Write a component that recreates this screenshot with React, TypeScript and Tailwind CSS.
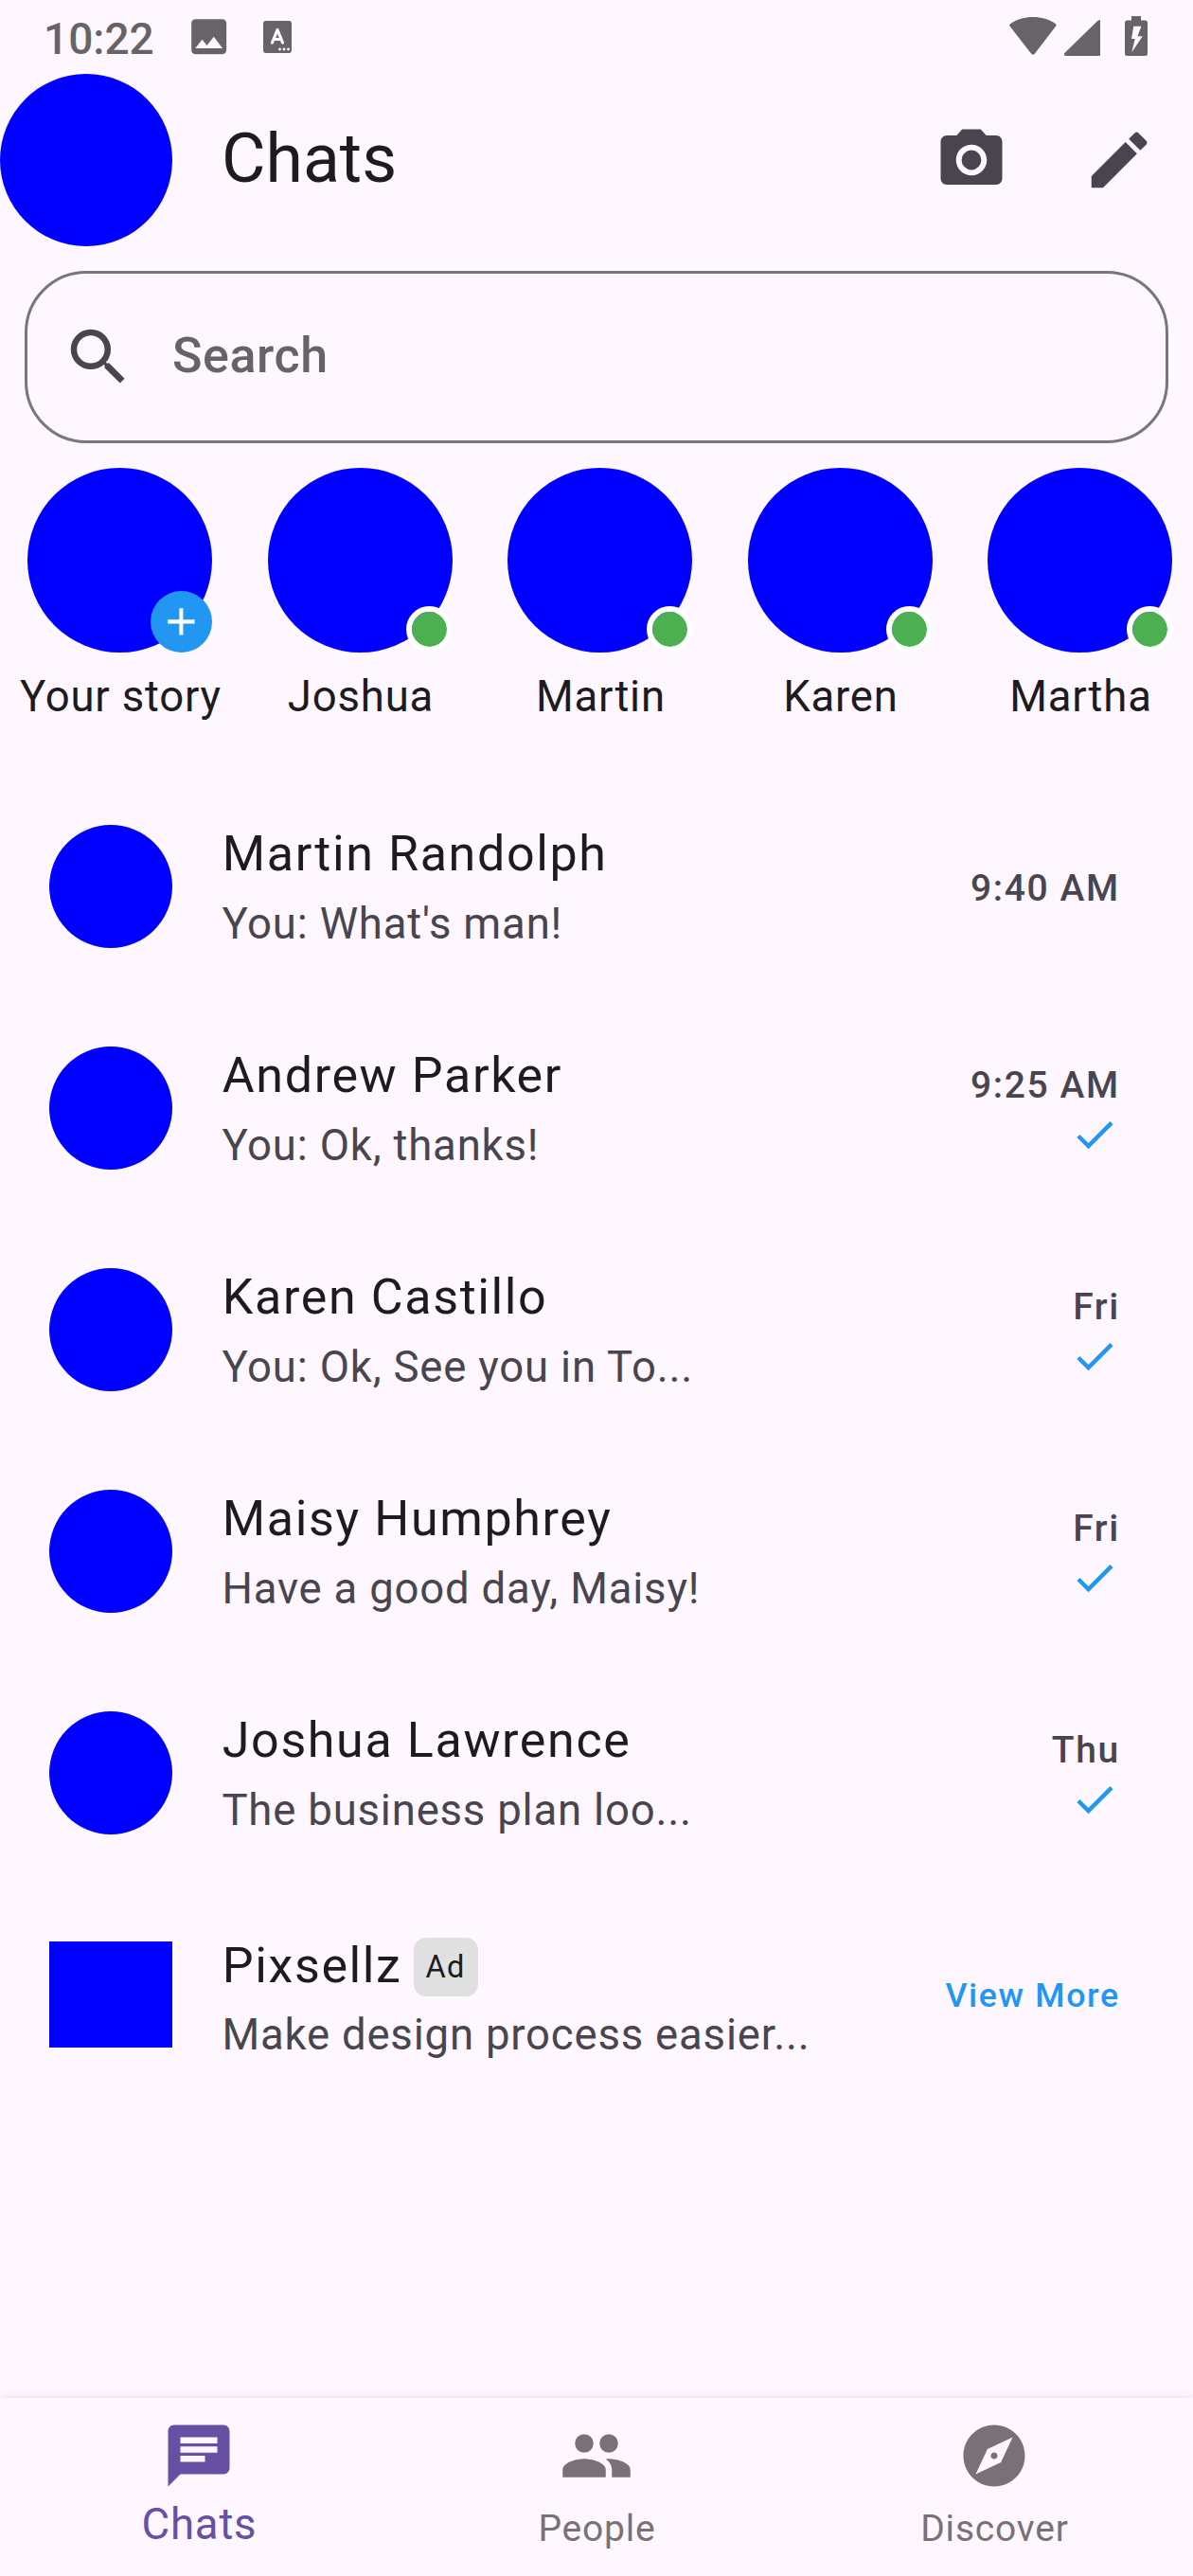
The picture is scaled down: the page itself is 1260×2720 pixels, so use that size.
import React from "react";

const ICONS = {
  camera:
    "M9 2L7.17 4H4c-1.1 0-2 .9-2 2v12c0 1.1.9 2 2 2h16c1.1 0 2-.9 2-2V6c0-1.1-.9-2-2-2h-3.17L15 2H9zm3 15c-2.76 0-5-2.24-5-5s2.24-5 5-5 5 2.24 5 5-2.24 5-5 5zM12 8.8a3.2 3.2 0 1 0 0 6.4 3.2 3.2 0 0 0 0-6.4z",
  edit: "M3 17.25V21h3.75L17.81 9.94l-3.75-3.75L3 17.25zM20.71 7.04a1 1 0 0 0 0-1.41l-2.34-2.34a1 1 0 0 0-1.41 0l-1.83 1.83 3.75 3.75 1.83-1.83z",
  search:
    "M15.5 14h-.79l-.28-.27A6.471 6.471 0 0 0 16 9.5 6.5 6.5 0 1 0 9.5 16c1.61 0 3.09-.59 4.23-1.57l.27.28v.79l5 4.99L20.49 19l-4.99-5zm-6 0C7.01 14 5 11.99 5 9.5S7.01 5 9.5 5 14 7.01 14 9.5 11.99 14 9.5 14z",
  add: "M19 13h-6v6h-2v-6H5v-2h6V5h2v6h6v2z",
  check: "M9 16.17L4.83 12l-1.42 1.41L9 19 21 7l-1.41-1.41z",
  chat: "M20 2H4c-1.1 0-1.99.9-1.99 2L2 22l4-4h14c1.1 0 2-.9 2-2V4c0-1.1-.9-2-2-2zM6 9h12v2H6V9zm8 5H6v-2h8v2zm4-6H6V6h12v2z",
  explore:
    "M12 10.9c-.61 0-1.1.49-1.1 1.1s.49 1.1 1.1 1.1c.61 0 1.1-.49 1.1-1.1s-.49-1.1-1.1-1.1zM12 2C6.48 2 2 6.48 2 12s4.48 10 10 10 10-4.48 10-10S17.52 2 12 2zm2.19 12.19L6 18l3.81-8.19L18 6l-3.81 8.19z",
  image:
    "M21 19V5c0-1.1-.9-2-2-2H5c-1.1 0-2 .9-2 2v14c0 1.1.9 2 2 2h14c1.1 0 2-.9 2-2zM8.500 13.500l2.500 3.010L14.500 12l4.500 6H5l3.500-4.500z",
};

function Icon({ d, className }: { d: string; className: string }) {
  return (
    <svg viewBox="0 0 24 24" className={`block shrink-0 ${className}`} fill="currentColor">
      <path d={d} fillRule="evenodd" />
    </svg>
  );
}

function PeopleIcon({ className }: { className: string }) {
  return (
    <svg viewBox="0 0 24 24" className={`block shrink-0 ${className}`} fill="currentColor">
      <circle cx="8" cy="8" r="3" />
      <circle cx="16" cy="8" r="3" />
      <path d="M8 13c-2.330 0-7 1.170-7 3.500V19h14v-2.500C15 14.170 10.330 13 8 13z" />
      <path d="M16 13c-.29 0-.62.020-.97.050 1.160.840 1.970 1.970 1.970 3.450V19h6v-2.500c0-2.330-4.670-3.500-7-3.500z" />
    </svg>
  );
}

function StatusBar() {
  return (
    <div className="flex h-[78px] items-start text-[#676468]">
      <span className="ml-[46px] mt-[14px] w-[150px] text-[46px] font-medium leading-[55px]">10:22</span>
      <Icon d={ICONS.image} className="mt-[14px] size-[49.3px]" />
      <svg viewBox="0 0 30 34" className="ml-[32.500px] mt-[22px] h-[34px] w-[30px]">
        <rect width="30" height="34" rx="3" fill="currentColor" />
        <path d="M9.500 23L15 9.500L20.500 23M11.500 19.500h7" fill="none" stroke="#fef7ff" strokeWidth="3.200" strokeLinecap="round" strokeLinejoin="round" />
        <circle cx="17.500" cy="30" r="1.400" fill="#fef7ff" />
        <circle cx="22" cy="30" r="1.400" fill="#fef7ff" />
        <circle cx="26.500" cy="30" r="1.400" fill="#fef7ff" />
      </svg>
      <svg viewBox="0 0 146 42" className="ml-auto mr-[48px] mt-[17px] h-[42px] w-[146px]" fill="currentColor">
        <path d="M1 8.200C14.500-1.300 35.500-1.300 49 8.200Q50 9.300 49 10.700L26.800 39.700Q25 41.500 23.200 39.700L.6 10.700Q-.4 9.300 1 8.200z" />
        <path d="M58.700 38.700L93.500 4.800Q95.500 3 96 5.500V40.500Q96 42 94.500 42H60Q57.500 42 58 39.500z" />
        <path fillRule="evenodd" d="M129 0h10v4.500h4.500Q146 4.500 146 7v32.500Q146 42 143.500 42h-19Q122 42 122 39.500V7Q122 4.500 124.500 4.500H129zM131.200 10.700L129 24h3.700L129.300 38.200L140.700 21.200H135.500L139.400 10.700z" />
      </svg>
    </div>
  );
}

function AppBar() {
  return (
    <header className="flex h-[182px] items-center">
      <div className="size-[182px] rounded-full bg-[#0000ff]" />
      <h1 className="mb-[3px] ml-[52px] text-[71.5px] leading-[91px] text-[#1d1b20]">Chats</h1>
      <div className="ml-auto flex text-[#49454f]">
        <button className="flex size-[156px] items-center justify-center">
          <Icon d={ICONS.camera} className="size-[78px]" />
        </button>
        <button className="flex size-[156px] items-center justify-center">
          <Icon d={ICONS.edit} className="size-[78px]" />
        </button>
      </div>
    </header>
  );
}

function SearchField() {
  return (
    <div className="mx-[26px] mt-[26px] flex h-[182px] items-center rounded-[65px] border-[3px] border-[#79747e] pl-[36px]">
      <Icon d={ICONS.search} className="size-[78px] text-[#49454f]" />
      <span className="mb-[3px] ml-[39px] text-[52px] font-medium leading-[78px] tracking-[0.55px] text-[#666367]">Search</span>
    </div>
  );
}

const stories = ["Your story", "Joshua", "Martin", "Karen", "Martha"];

function Stories() {
  return (
    <section className="mt-[26px] flex h-[325px] overflow-hidden">
      {stories.map((name, i) => (
        <div key={name} className="flex w-[253.5px] shrink-0 flex-col items-center">
          <div className="relative size-[195px] rounded-full bg-[#0000ff]">
            {i === 0 ? (
              <div className="absolute bottom-0 right-0 flex size-[65px] items-center justify-center rounded-full bg-[#2196f3] text-white">
                <Icon d={ICONS.add} className="size-[48.75px]" />
              </div>
            ) : (
              <div className="absolute bottom-0 -right-[0.5px] size-[49px] rounded-full border-[6.5px] border-white bg-[#4caf50] bg-clip-padding" />
            )}
          </div>
          <span className="mt-[14px] whitespace-nowrap pl-[1.4px] text-[45.5px] leading-[65px] tracking-[0.8125px] text-[#1d1b20]">{name}</span>
        </div>
      ))}
    </section>
  );
}

type Chat = { name: string; message: string; time: string; read: boolean };

const chats: Chat[] = [
  { name: "Martin Randolph", message: "You: What's man!", time: "9:40 AM", read: false },
  { name: "Andrew Parker", message: "You: Ok, thanks!", time: "9:25 AM", read: true },
  { name: "Karen Castillo", message: "You: Ok, See you in To...", time: "Fri", read: true },
  { name: "Maisy Humphrey", message: "Have a good day, Maisy!", time: "Fri", read: true },
  { name: "Joshua Lawrence", message: "The business plan loo...", time: "Thu", read: true },
];

function ChatRow({ chat }: { chat: Chat }) {
  return (
    <li className="flex h-[234px] items-center pl-[52px] pr-[78px]">
      <div className="size-[130px] rounded-full bg-[#0000ff]" />
      <div className="ml-[52px] flex flex-col whitespace-nowrap">
        <span className="mb-[4px] pl-[0.8px] text-[52px] leading-[74px] tracking-[1.625px] text-[#1d1b20]">{chat.name}</span>
        <span className="pl-[0.4px] text-[45.5px] leading-[65px] tracking-[0.8125px] text-[#49454f]">{chat.message}</span>
      </div>
      <div className="ml-auto flex flex-col items-end pt-[3px]">
        <span className="-mr-[0.8px] text-[39px] font-medium leading-[52px] tracking-[1.625px] text-[#49454f]">{chat.time}</span>
        {chat.read && <Icon d={ICONS.check} className="size-[52px] text-[#2196f3]" />}
      </div>
    </li>
  );
}

function AdRow() {
  return (
    <li className="flex h-[234px] items-center pl-[52px] pr-[78px]">
      <div className="h-[112px] w-[130px] bg-[#0000ff]" />
      <div className="ml-[52px] flex flex-col whitespace-nowrap pt-[7px]">
        <div className="flex h-[78px] items-center">
          <span className="mb-[2px] pl-[0.8px] text-[52px] leading-[76px] tracking-[1.625px] text-[#1d1b20]">Pixsellz</span>
          <span className="ml-[12px] flex h-[62px] items-center rounded-[13px] bg-[#e0e0e0] px-[13px] text-[32.5px] leading-[36px] tracking-[1.3px] text-[#1d1b20]">Ad</span>
        </div>
        <span className="pl-[0.4px] text-[45.5px] leading-[65px] tracking-[0.8125px] text-[#49454f]">Make design process easier...</span>
      </div>
      <span className="-mr-[0.8px] ml-auto pt-[2px] text-[35.75px] font-medium leading-[52px] tracking-[1.625px] text-[#2196f3]">View More</span>
    </li>
  );
}

function BottomNav() {
  return (
    <nav className="mt-auto grid h-[188.5px] grid-cols-3 bg-[#fef7ff] pt-[22.5px] shadow-[0_-2px_7px_rgba(0,0,0,0.08)]">
      <div className="flex flex-col items-center text-[#6750a4]">
        <Icon d={ICONS.chat} className="size-[78px]" />
        <span className="mt-[1px] pl-[1px] text-[45.5px] leading-[65px] tracking-[0.8125px]">Chats</span>
      </div>
      <div className="flex flex-col items-center text-[#787276]">
        <PeopleIcon className="size-[78px]" />
        <span className="mt-[12px] pl-[1px] text-[39px] leading-[52px] tracking-[0.8125px]">People</span>
      </div>
      <div className="flex flex-col items-center text-[#787276]">
        <Icon d={ICONS.explore} className="size-[78px]" />
        <span className="mt-[12px] pl-[1px] text-[39px] leading-[52px] tracking-[0.8125px]">Discover</span>
      </div>
    </nav>
  );
}

export default function App() {
  return (
    <div className="flex h-[2720px] w-[1260px] flex-col overflow-hidden bg-[#fef7ff] font-['Roboto',sans-serif]">
      <StatusBar />
      <AppBar />
      <SearchField />
      <Stories />
      <ul className="flex flex-col">
        {chats.map((chat) => (
          <ChatRow key={chat.name} chat={chat} />
        ))}
        <AdRow />
      </ul>
      <BottomNav />
    </div>
  );
}
